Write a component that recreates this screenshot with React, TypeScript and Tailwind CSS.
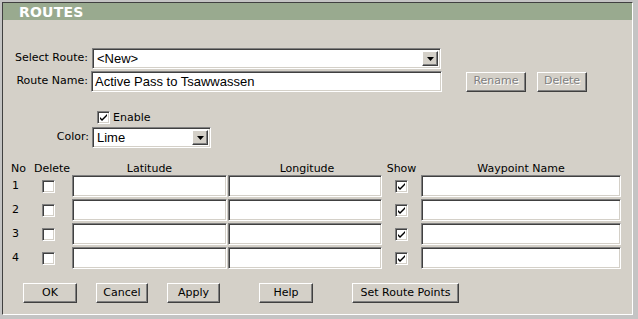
const ui = { fontFamily: '"DejaVu Sans", Verdana, sans-serif' };
const field = { fontFamily: '"Liberation Sans", Arial, sans-serif' };

const sunken =
  'border border-t-[#808080] border-l-[#808080] border-b-white border-r-white bg-white shadow-[inset_1px_1px_#404040,inset_-1px_-1px_#d4d0c8]';
const raised =
  'border border-t-white border-l-white border-b-[#404040] border-r-[#404040] bg-[#d4d0c8] shadow-[inset_-1px_-1px_#808080]';

function Arrow() {
  return (
    <div className={`${raised} flex h-full w-[16px] shrink-0 items-center justify-center`}>
      <svg width="7" height="4" viewBox="0 0 7 4">
        <path d="M0 0h7L3.5 4z" fill="#000" />
      </svg>
    </div>
  );
}

function Select({ value, className }: { value: string; className: string }) {
  return (
    <div className={`${sunken} flex items-stretch p-[2px] ${className}`}>
      <span className="flex-1 pl-[2px] text-[13px] leading-[15px] text-black" style={field}>
        {value}
      </span>
      <Arrow />
    </div>
  );
}

function Check({ on }: { on?: boolean }) {
  return (
    <div className={`${sunken} flex h-[13px] w-[13px] shrink-0 items-center justify-center`}>
      {on && (
        <svg width="9" height="9" viewBox="0 0 9 9">
          <path d="M1 4l2 2 5-5v2L3 8 1 6z" fill="#000" />
        </svg>
      )}
    </div>
  );
}

function Button({ label, w, disabled }: { label: string; w: string; disabled?: boolean }) {
  return (
    <div
      className={`${raised} flex h-[20px] items-center justify-center text-[11px] ${w} ${
        disabled ? 'text-[#808080] [text-shadow:1px_1px_0_#fff]' : 'text-black'
      }`}
    >
      {label}
    </div>
  );
}

const rows = [1, 2, 3, 4];

export default function App() {
  return (
    <div className="h-[319px] w-[638px] bg-[#c4c4c4] pl-[2px] pt-[2px]" style={ui}>
      <div className="h-[313px] w-[631px] border border-t-[#404040] border-l-[#404040] border-b-white border-r-white bg-[#d4d0c8]">
        <div className="flex h-[17px] items-center bg-[#99aa8f] pl-[16px]">
          <span className="text-[14px] font-bold leading-none tracking-[0.2px] text-white">ROUTES</span>
        </div>

        <div className="mt-[28px] flex items-center text-[11px] text-black">
          <span className="w-[85px] text-right">Select Route:</span>
          <Select value="<New>" className="ml-[4px] h-[21px] w-[349px]" />
        </div>

        <div className="mt-[2px] flex items-center text-[11px] text-black">
          <span className="w-[85px] text-right">Route Name:</span>
          <div className={`${sunken} ml-[3px] flex h-[21px] w-[351px] items-center pl-[3px]`}>
            <span className="text-[13px] text-black" style={field}>
              Active Pass to Tsawwassen
            </span>
          </div>
          <div className="ml-[24px] flex gap-[11px]">
            <Button label="Rename" w="w-[60px]" disabled />
            <Button label="Delete" w="w-[50px]" disabled />
          </div>
        </div>

        <div className="mt-[19px] flex items-center pl-[94px] text-[11px] text-black">
          <Check on />
          <span className="ml-[3px] leading-none">Enable</span>
        </div>

        <div className="mt-[3px] flex items-center text-[11px] text-black">
          <span className="w-[86px] text-right">Color:</span>
          <Select value="Lime" className="ml-[3px] h-[21px] w-[119px]" />
        </div>

        <div className="mt-[12px] pl-[8px] text-[11px] text-black">
          <div className="flex h-[14px] items-end leading-none">
            <span className="w-[23px]">No</span>
            <span className="w-[38px]">Delete</span>
            <span className="w-[155px] text-center">Latitude</span>
            <span className="ml-[1px] w-[154px] pl-[4px] text-center">Longitude</span>
            <span className="w-[39px] text-center">Show</span>
            <span className="w-[200px] text-center">Waypoint Name</span>
          </div>
          <div className="mt-[1px] flex flex-col gap-[2px]">
            {rows.map((n) => (
              <div key={n} className="flex h-[22px] items-center">
                <span className="w-[23px] pl-[1px]">{n}</span>
                <div className="w-[38px] pl-[8px]">
                  <Check />
                </div>
                <div className={`${sunken} h-[22px] w-[155px]`} />
                <div className={`${sunken} ml-[1px] h-[22px] w-[154px]`} />
                <div className="w-[39px] pl-[13px]">
                  <Check on />
                </div>
                <div className={`${sunken} h-[22px] w-[200px]`} />
              </div>
            ))}
          </div>
        </div>

        <div className="mt-[14px] flex pl-[20px]">
          <Button label="OK" w="w-[54px]" />
          <div className="ml-[19px]">
            <Button label="Cancel" w="w-[52px]" />
          </div>
          <div className="ml-[19px]">
            <Button label="Apply" w="w-[53px]" />
          </div>
          <div className="ml-[39px]">
            <Button label="Help" w="w-[54px]" />
          </div>
          <div className="ml-[39px]">
            <Button label="Set Route Points" w="w-[107px]" />
          </div>
        </div>
      </div>
    </div>
  );
}
